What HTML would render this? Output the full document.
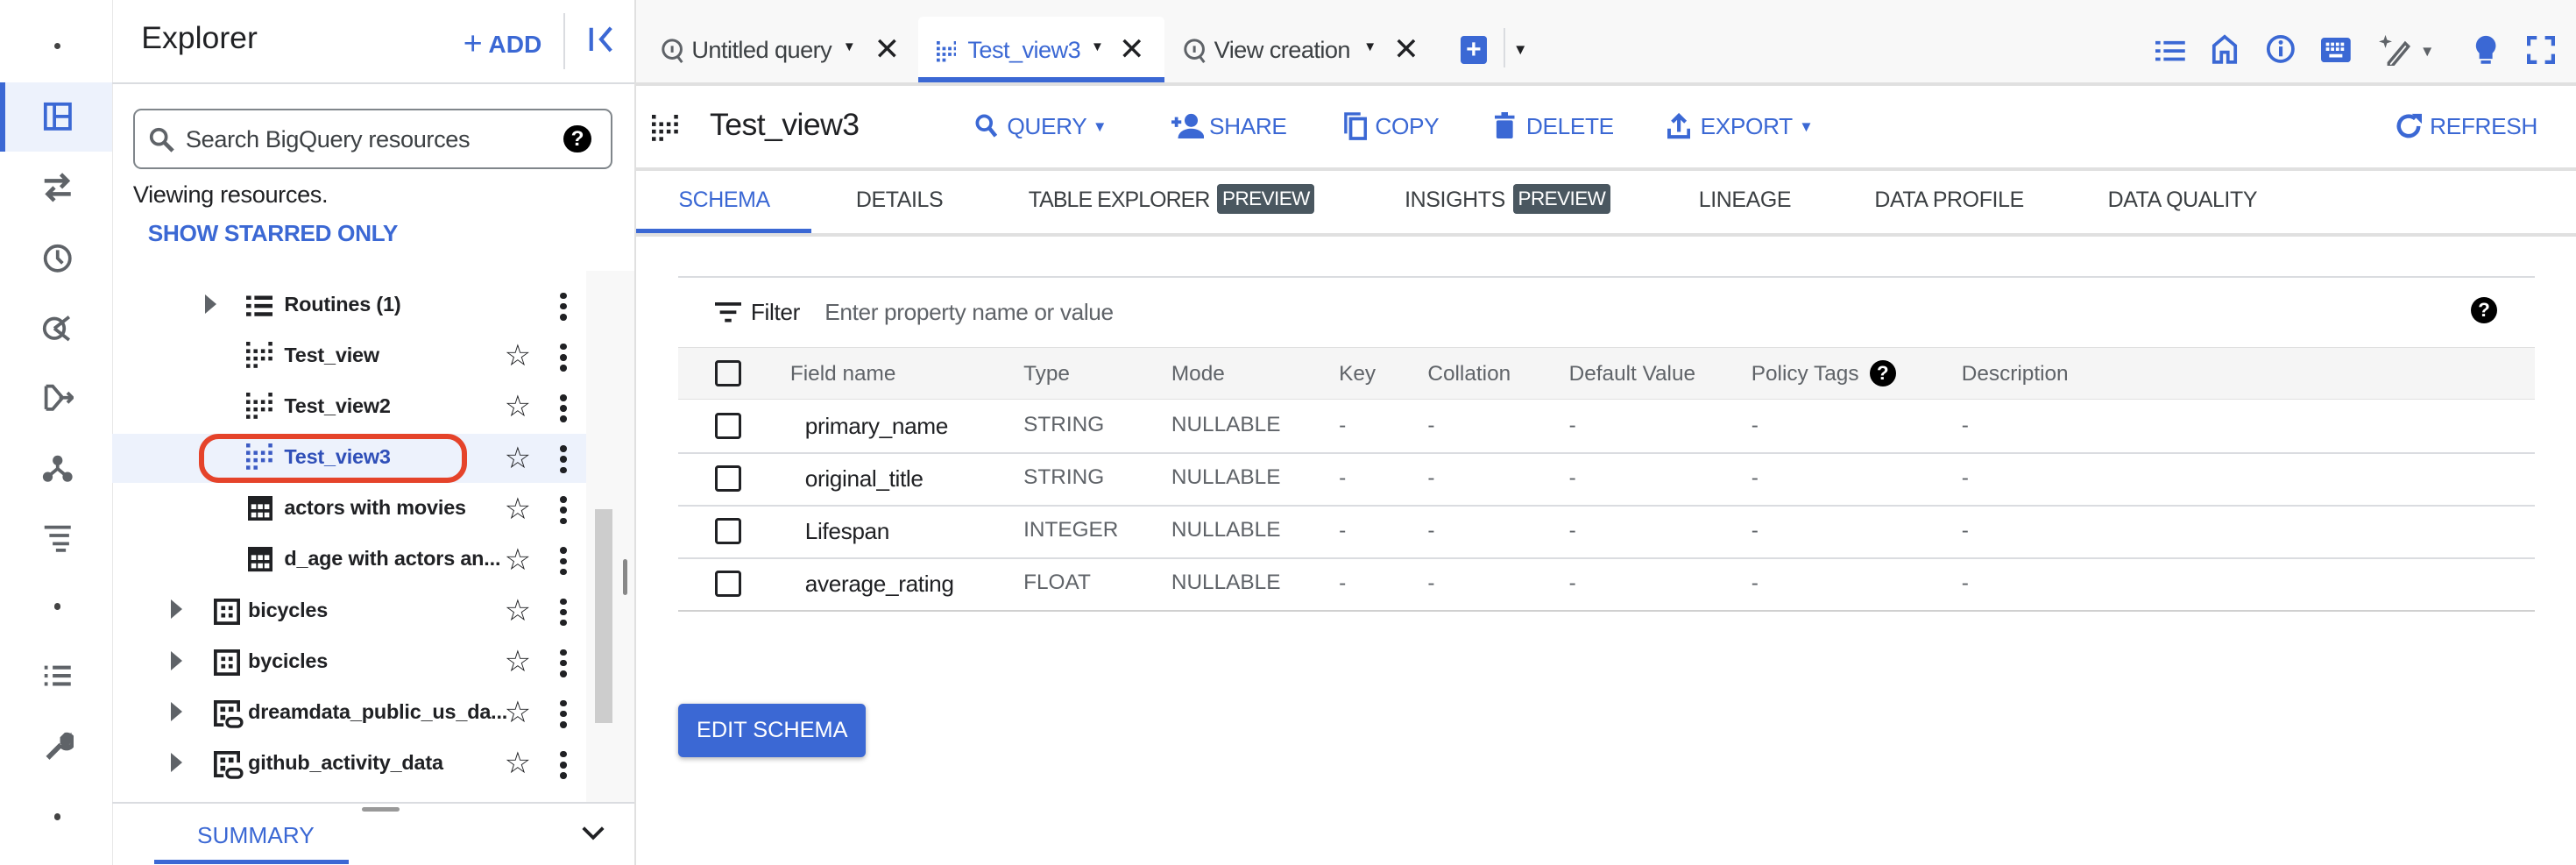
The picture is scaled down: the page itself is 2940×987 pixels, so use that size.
<!DOCTYPE html>
<html><head><meta charset="utf-8"><style>
*{box-sizing:border-box;margin:0;padding:0}
html,body{width:2940px;height:987px;overflow:hidden;background:#fff}
#r{zoom:1.875;width:1568px;height:527px;position:relative;font-family:"Liberation Sans",sans-serif;color:#202124;font-size:13px}
.a{position:absolute;white-space:nowrap}
.b{color:#3b68d4}
.m{font-weight:bold}
.t{font-weight:bold;font-size:12.5px;letter-spacing:-0.1px}
.hl{position:absolute;height:1px;background:#dadce0}
.vl{position:absolute;width:1px;background:#dadce0}
.dot{position:absolute;width:4px;height:4px;border-radius:2px;background:#444}
.star{font-size:18px;color:#202124}
.kb{position:absolute;width:4px}
.kb i{display:block;width:4px;height:4px;border-radius:2px;background:#202124;margin-bottom:2.5px}
.cb{position:absolute;width:16px;height:16px;border:2px solid #202124;border-radius:2px}
.tri{position:absolute;width:0;height:0;border-top:6px solid transparent;border-bottom:6px solid transparent;border-left:7px solid #5f6368}
.badge{position:absolute;background:#4a5760;color:#fff;font-size:12px;padding:2px 3px;border-radius:2px;letter-spacing:-0.3px}
.st{position:absolute;white-space:nowrap;font-size:13.3px;color:#3c4043;letter-spacing:-0.2px}
.hb{position:absolute;white-space:nowrap;font-size:14px;color:#3b68d4;letter-spacing:-0.2px}
</style></head><body><div id="r">
<div class="vl" style="left:68px;top:0;height:527px;background:#e8e8e8"></div>
<div class="a" style="left:0;top:50px;width:68px;height:42px;background:#edf2fc"></div>
<div class="a" style="left:0;top:50px;width:3px;height:42px;background:#3b68d4"></div>
<div class="dot" style="left:33px;top:26px"></div>
<div class="dot" style="left:33px;top:367px"></div>
<div class="dot" style="left:33px;top:495px"></div>
<svg class="a" style="left:26px;top:62px" width="18" height="18" viewBox="0 0 18 18"><rect x="1.5" y="1.5" width="15" height="15" fill="none" stroke="#3b68d4" stroke-width="2"/><path d="M7 1.5v15M7 9h9.5" stroke="#3b68d4" stroke-width="2"/></svg>
<svg class="a" style="left:25px;top:105px" width="20" height="18" viewBox="0 0 20 18"><path d="M2 5h13M12 1l4 4-4 4M18 13H5M8 9l-4 4 4 4" fill="none" stroke="#5f6368" stroke-width="2.4"/></svg>
<svg class="a" style="left:25px;top:147px" width="20" height="20"><circle cx="10" cy="10" r="7.5" fill="none" stroke="#5f6368" stroke-width="2"/><path d="M10 5v5l3 3" fill="none" stroke="#5f6368" stroke-width="2"/></svg>
<svg class="a" style="left:25px;top:190px" width="20" height="20"><circle cx="8" cy="10" r="6" fill="none" stroke="#5f6368" stroke-width="2"/><path d="M8 10l9-7M8 10l9 7" stroke="#5f6368" stroke-width="2"/></svg>
<svg class="a" style="left:25px;top:232px" width="20" height="20"><path d="M3 3v14M3 3h4l6 7-6 7H3M11 10h8M16 7l3 3-3 3" fill="none" stroke="#5f6368" stroke-width="2"/></svg>
<svg class="a" style="left:25px;top:275px" width="20" height="20"><circle cx="10" cy="5" r="3" fill="#5f6368"/><circle cx="4" cy="15" r="3" fill="#5f6368"/><circle cx="16" cy="15" r="3" fill="#5f6368"/><path d="M10 5v5L4 15M10 10l6 5" stroke="#5f6368" stroke-width="2" fill="none"/></svg>
<svg class="a" style="left:25px;top:318px" width="20" height="18"><path d="M2 3h16M5 8h12M7 13h10M9 17h6" stroke="#5f6368" stroke-width="2"/></svg>
<svg class="a" style="left:25px;top:403px" width="20" height="16"><path d="M2 3h2M7 3h11M2 8h2M7 8h11M2 13h2M7 13h11" stroke="#5f6368" stroke-width="2.2"/></svg>
<svg class="a" style="left:25px;top:444px" width="20" height="20"><path d="M4 17l8-8M12 9a4 4 0 1 0 3-6l-2 2 0 2 2 0 2-2a4 4 0 0 1-5 4" stroke="#5f6368" stroke-width="3" fill="none"/></svg>

<div class="vl" style="left:386px;top:0;height:527px;background:#e0e0e0"></div>
<div class="a" style="left:86px;top:12px;font-size:19px">Explorer</div>
<div class="a b" style="left:282px;top:14px;font-size:15px;font-weight:bold"><span style="font-size:20px;font-weight:normal;position:relative;top:1px">+</span> ADD</div>
<div class="vl" style="left:343px;top:8px;height:34px"></div>
<svg class="a" style="left:358px;top:15px" width="18" height="18"><path d="M2 2v14M14 2l-6 7 6 7" stroke="#3b68d4" stroke-width="2.2" fill="none"/></svg>
<div class="hl" style="left:68px;top:50px;width:318px"></div>
<div class="a" style="left:81px;top:66px;width:292px;height:37px;border:1.5px solid #80868b;border-radius:5px"></div>
<svg class="a" style="left:90px;top:77px" width="16" height="16"><circle cx="6.5" cy="6.5" r="4.5" fill="none" stroke="#5f6368" stroke-width="2"/><path d="M10 10l5 5" stroke="#5f6368" stroke-width="2.5"/></svg>
<div class="a" style="left:113px;top:76px;font-size:14.5px;color:#3c4043;letter-spacing:-0.2px">Search BigQuery resources</div>
<div class="a" style="left:343px;top:76px;width:17px;height:17px;border-radius:9px;background:#000;color:#fff;font-size:13px;font-weight:bold;text-align:center;line-height:17px">?</div>
<div class="a" style="left:81px;top:110px;font-size:14.5px;letter-spacing:-0.2px">Viewing resources.</div>
<div class="a b m" style="left:90px;top:134px;font-size:14px;letter-spacing:-0.2px">SHOW STARRED ONLY</div>
<div class="a" style="left:357px;top:165px;width:29px;height:323px;background:#f8f8f8"></div>
<div class="a" style="left:362px;top:310px;width:11px;height:130px;background:#cdcdcd"></div>
<div class="a" style="left:379px;top:340px;width:3px;height:22px;border-radius:2px;background:#888"></div>
<div class="a" style="left:68px;top:264px;width:289px;height:30px;background:#edf2fc"></div>
<div class="a" style="left:121px;top:264px;width:163px;height:30px;border:3.5px solid #e5432a;border-radius:12px"></div>

<div class="tri" style="left:125px;top:179px"></div>
<svg class="a" style="left:150px;top:179px" width="16" height="14"><path d="M0 2h3M5 2h11M0 7h3M5 7h11M0 12h3M5 12h11" stroke="#202124" stroke-width="2.4"/></svg>
<div class="a t" style="left:173px;top:178px">Routines (1)</div>
<svg class="a" style="left:150px;top:208px" width="16" height="16"><g fill="#202124"><rect x="0" y="0" width="2.4" height="2.4"/><rect x="0" y="4.5" width="2.4" height="2.4"/><rect x="0" y="9" width="2.4" height="2.4"/><rect x="0" y="13.5" width="2.4" height="2.4"/><rect x="4.5" y="4.5" width="2.4" height="2.4"/><rect x="4.5" y="9" width="2.4" height="2.4"/><rect x="4.5" y="13.5" width="2.4" height="2.4"/><rect x="9" y="4.5" width="2.4" height="2.4"/><rect x="9" y="9" width="2.4" height="2.4"/><rect x="13.5" y="0" width="2.4" height="2.4"/><rect x="13.5" y="4.5" width="2.4" height="2.4"/><rect x="13.5" y="9" width="2.4" height="2.4"/></g></svg>
<div class="a t" style="left:173px;top:209px">Test_view</div>
<svg class="a" style="left:150px;top:239px" width="16" height="16"><g fill="#202124"><rect x="0" y="0" width="2.4" height="2.4"/><rect x="0" y="4.5" width="2.4" height="2.4"/><rect x="0" y="9" width="2.4" height="2.4"/><rect x="0" y="13.5" width="2.4" height="2.4"/><rect x="4.5" y="4.5" width="2.4" height="2.4"/><rect x="4.5" y="9" width="2.4" height="2.4"/><rect x="4.5" y="13.5" width="2.4" height="2.4"/><rect x="9" y="4.5" width="2.4" height="2.4"/><rect x="9" y="9" width="2.4" height="2.4"/><rect x="13.5" y="0" width="2.4" height="2.4"/><rect x="13.5" y="4.5" width="2.4" height="2.4"/><rect x="13.5" y="9" width="2.4" height="2.4"/></g></svg>
<div class="a t" style="left:173px;top:240px">Test_view2</div>
<svg class="a" style="left:150px;top:270px" width="16" height="16"><g fill="#3b5bc4"><rect x="0" y="0" width="2.4" height="2.4"/><rect x="0" y="4.5" width="2.4" height="2.4"/><rect x="0" y="9" width="2.4" height="2.4"/><rect x="0" y="13.5" width="2.4" height="2.4"/><rect x="4.5" y="4.5" width="2.4" height="2.4"/><rect x="4.5" y="9" width="2.4" height="2.4"/><rect x="4.5" y="13.5" width="2.4" height="2.4"/><rect x="9" y="4.5" width="2.4" height="2.4"/><rect x="9" y="9" width="2.4" height="2.4"/><rect x="13.5" y="0" width="2.4" height="2.4"/><rect x="13.5" y="4.5" width="2.4" height="2.4"/><rect x="13.5" y="9" width="2.4" height="2.4"/></g></svg>
<div class="a t" style="left:173px;top:271px;color:#2f4fb8">Test_view3</div>
<svg class="a" style="left:151px;top:302px" width="15" height="15"><rect width="15" height="15" fill="#202124"/><g fill="#fff"><rect x="2" y="5" width="3" height="3"/><rect x="6" y="5" width="3" height="3"/><rect x="10" y="5" width="3" height="3"/><rect x="2" y="10" width="3" height="3"/><rect x="6" y="10" width="3" height="3"/><rect x="10" y="10" width="3" height="3"/></g></svg>
<div class="a t" style="left:173px;top:302px">actors with movies</div>
<svg class="a" style="left:151px;top:333px" width="15" height="15"><rect width="15" height="15" fill="#202124"/><g fill="#fff"><rect x="2" y="5" width="3" height="3"/><rect x="6" y="5" width="3" height="3"/><rect x="10" y="5" width="3" height="3"/><rect x="2" y="10" width="3" height="3"/><rect x="6" y="10" width="3" height="3"/><rect x="10" y="10" width="3" height="3"/></g></svg>
<div class="a t" style="left:173px;top:333px">d_age with actors an...</div>

<div class="tri" style="left:104px;top:365px"></div>
<svg class="a" style="left:130px;top:364px" width="16" height="16"><rect x="1" y="1" width="14" height="14" fill="none" stroke="#202124" stroke-width="2"/><g fill="#202124"><rect x="4.5" y="4.5" width="2.5" height="2.5"/><rect x="9" y="4.5" width="2.5" height="2.5"/><rect x="4.5" y="9" width="2.5" height="2.5"/><rect x="9" y="9" width="2.5" height="2.5"/></g></svg>
<div class="a t" style="left:151px;top:364px">bicycles</div>
<div class="tri" style="left:104px;top:396px"></div>
<svg class="a" style="left:130px;top:395px" width="16" height="16"><rect x="1" y="1" width="14" height="14" fill="none" stroke="#202124" stroke-width="2"/><g fill="#202124"><rect x="4.5" y="4.5" width="2.5" height="2.5"/><rect x="9" y="4.5" width="2.5" height="2.5"/><rect x="4.5" y="9" width="2.5" height="2.5"/><rect x="9" y="9" width="2.5" height="2.5"/></g></svg>
<div class="a t" style="left:151px;top:395px">bycicles</div>
<div class="tri" style="left:104px;top:427px"></div>
<svg class="a" style="left:130px;top:426px" width="18" height="18"><path d="M6 15H1V1h14v6" fill="none" stroke="#202124" stroke-width="2"/><g fill="#202124"><rect x="4" y="4" width="3" height="3"/><rect x="9" y="4" width="3" height="3"/><rect x="4" y="9" width="3" height="3"/></g><rect x="8" y="11" width="9" height="5" rx="2.5" fill="none" stroke="#202124" stroke-width="1.8"/></svg>
<div class="a t" style="left:151px;top:426px">dreamdata_public_us_da...</div>
<div class="tri" style="left:104px;top:458px"></div>
<svg class="a" style="left:130px;top:457px" width="18" height="18"><path d="M6 15H1V1h14v6" fill="none" stroke="#202124" stroke-width="2"/><g fill="#202124"><rect x="4" y="4" width="3" height="3"/><rect x="9" y="4" width="3" height="3"/><rect x="4" y="9" width="3" height="3"/></g><rect x="8" y="11" width="9" height="5" rx="2.5" fill="none" stroke="#202124" stroke-width="1.8"/></svg>
<div class="a t" style="left:151px;top:457px">github_activity_data</div>

<div class="a star" style="left:307px;top:206px">☆</div>
<div class="a star" style="left:307px;top:237px">☆</div>
<div class="a star" style="left:307px;top:268px">☆</div>
<div class="a star" style="left:307px;top:299px">☆</div>
<div class="a star" style="left:307px;top:330px">☆</div>
<div class="a star" style="left:307px;top:361px">☆</div>
<div class="a star" style="left:307px;top:392px">☆</div>
<div class="a star" style="left:307px;top:423px">☆</div>
<div class="a star" style="left:307px;top:454px">☆</div>
<div class="kb" style="left:341px;top:178px"><i></i><i></i><i></i></div>
<div class="kb" style="left:341px;top:209px"><i></i><i></i><i></i></div>
<div class="kb" style="left:341px;top:240px"><i></i><i></i><i></i></div>
<div class="kb" style="left:341px;top:271px"><i></i><i></i><i></i></div>
<div class="kb" style="left:341px;top:302px"><i></i><i></i><i></i></div>
<div class="kb" style="left:341px;top:333px"><i></i><i></i><i></i></div>
<div class="kb" style="left:341px;top:364px"><i></i><i></i><i></i></div>
<div class="kb" style="left:341px;top:395px"><i></i><i></i><i></i></div>
<div class="kb" style="left:341px;top:426px"><i></i><i></i><i></i></div>
<div class="kb" style="left:341px;top:457px"><i></i><i></i><i></i></div>

<div class="hl" style="left:68px;top:488px;width:318px"></div>
<div class="a" style="left:220px;top:491px;width:23px;height:3px;border-radius:2px;background:#999"></div>
<div class="a b" style="left:120px;top:500px;font-size:14px">SUMMARY</div>
<div class="a" style="left:94px;top:523px;width:118px;height:3px;background:#3b68d4"></div>
<svg class="a" style="left:353px;top:501px" width="16" height="12"><path d="M2 3l6 6 6-6" stroke="#202124" stroke-width="2" fill="none"/></svg>

<div class="a" style="left:387px;top:0;width:1181px;height:50px;background:#f8f8f8"></div>
<div class="a" style="left:559px;top:10px;width:150px;height:40px;background:#fff;border-radius:3px 3px 0 0"></div>
<div class="a" style="left:559px;top:47px;width:150px;height:3px;background:#3b68d4"></div>
<div class="hl" style="left:387px;top:50px;width:1181px;height:2px;background:#e0e0e0"></div>
<svg class="a" style="left:402px;top:23px" width="14" height="16"><circle cx="7" cy="7" r="5.5" fill="none" stroke="#5f6368" stroke-width="1.6"/><path d="M10 11l3 4M7 5v4" stroke="#5f6368" stroke-width="1.6"/></svg>
<div class="a" style="left:421px;top:22px;font-size:14.5px;color:#3c4043;letter-spacing:-0.3px">Untitled query</div>
<div class="a" style="left:513px;top:24px;font-size:8px">▼</div>
<div class="a" style="left:532px;top:19px;font-size:19px">✕</div>
<svg class="a" style="left:570px;top:25px" width="12" height="13"><g fill="#3b68d4"><rect x="0" y="0" width="2" height="2"/><rect x="0" y="3.5" width="2" height="2"/><rect x="0" y="7" width="2" height="2"/><rect x="0" y="10.5" width="2" height="2"/><rect x="3.5" y="3.5" width="2" height="2"/><rect x="3.5" y="7" width="2" height="2"/><rect x="3.5" y="10.5" width="2" height="2"/><rect x="7" y="3.5" width="2" height="2"/><rect x="7" y="7" width="2" height="2"/><rect x="10.5" y="0" width="2" height="2"/><rect x="10.5" y="3.5" width="2" height="2"/><rect x="10.5" y="7" width="2" height="2"/></g></svg>
<div class="a b" style="left:589px;top:22px;font-size:14.5px;letter-spacing:-0.3px">Test_view3</div>
<div class="a" style="left:664px;top:24px;font-size:8px">▼</div>
<div class="a" style="left:681px;top:19px;font-size:19px">✕</div>
<svg class="a" style="left:720px;top:23px" width="14" height="16"><circle cx="7" cy="7" r="5.5" fill="none" stroke="#5f6368" stroke-width="1.6"/><path d="M10 11l3 4M7 5v4" stroke="#5f6368" stroke-width="1.6"/></svg>
<div class="a" style="left:739px;top:22px;font-size:14.5px;color:#3c4043;letter-spacing:-0.3px">View creation</div>
<div class="a" style="left:830px;top:24px;font-size:8px">▼</div>
<div class="a" style="left:848px;top:19px;font-size:19px">✕</div>
<div class="a" style="left:889px;top:22px;width:16px;height:17px;background:#3b68d4;border-radius:2px;color:#fff;font-size:16px;font-weight:bold;text-align:center;line-height:17px">+</div>
<div class="vl" style="left:915px;top:17px;height:24px"></div>
<div class="a" style="left:921px;top:25px;font-size:9px">▼</div>
<svg class="a" style="left:1312px;top:24px" width="18" height="14"><path d="M0 2h3M5 2h13M0 7h3M5 7h13M0 12h3M5 12h13" stroke="#3b68d4" stroke-width="2"/></svg>
<svg class="a" style="left:1346px;top:21px" width="16" height="18"><path d="M1.5 17V7L8 1.5 14.5 7v10H10v-6H6v6z" fill="none" stroke="#3b68d4" stroke-width="2"/></svg>
<svg class="a" style="left:1379px;top:21px" width="18" height="18"><circle cx="9" cy="9" r="7.5" fill="none" stroke="#3b68d4" stroke-width="2"/><rect x="8" y="7.5" width="2.2" height="6" fill="#3b68d4"/><circle cx="9.1" cy="5" r="1.3" fill="#3b68d4"/></svg>
<svg class="a" style="left:1413px;top:23px" width="18" height="15"><rect width="18" height="15" rx="2" fill="#3b68d4"/><g fill="#fff"><rect x="3" y="3" width="2" height="2"/><rect x="6" y="3" width="2" height="2"/><rect x="9" y="3" width="2" height="2"/><rect x="12" y="3" width="2" height="2"/><rect x="3" y="6" width="2" height="2"/><rect x="6" y="6" width="2" height="2"/><rect x="9" y="6" width="2" height="2"/><rect x="12" y="6" width="2" height="2"/><rect x="5" y="10" width="8" height="2"/></g></svg>
<svg class="a" style="left:1448px;top:20px" width="22" height="20"><path d="M4 1l1 3 3 1-3 1-1 3-1-3-3-1 3-1z" fill="#5f6368"/><path d="M6 18l10-12 2 2-10 12H6z" fill="none" stroke="#5f6368" stroke-width="1.8"/></svg>
<div class="a" style="left:1473px;top:26px;font-size:9px;color:#5f6368">▼</div>
<svg class="a" style="left:1506px;top:21px" width="14" height="20"><path d="M7 1a6 6 0 0 0-4 10.5V15h8v-3.5A6 6 0 0 0 7 1z" fill="#3b68d4"/><rect x="4" y="16" width="6" height="2" fill="#3b68d4"/></svg>
<svg class="a" style="left:1538px;top:22px" width="17" height="17"><path d="M1 6V1h5M11 1h5v5M16 11v5h-5M6 16H1v-5" stroke="#3b68d4" stroke-width="2.4" fill="none"/></svg>

<svg class="a" style="left:397px;top:70px" width="16" height="16"><g fill="#202124"><rect x="0" y="0" width="2.4" height="2.4"/><rect x="0" y="4.5" width="2.4" height="2.4"/><rect x="0" y="9" width="2.4" height="2.4"/><rect x="0" y="13.5" width="2.4" height="2.4"/><rect x="4.5" y="4.5" width="2.4" height="2.4"/><rect x="4.5" y="9" width="2.4" height="2.4"/><rect x="4.5" y="13.5" width="2.4" height="2.4"/><rect x="9" y="4.5" width="2.4" height="2.4"/><rect x="9" y="9" width="2.4" height="2.4"/><rect x="13.5" y="0" width="2.4" height="2.4"/><rect x="13.5" y="4.5" width="2.4" height="2.4"/><rect x="13.5" y="9" width="2.4" height="2.4"/></g></svg>
<div class="a" style="left:432px;top:65px;font-size:19px;letter-spacing:-0.3px">Test_view3</div>
<svg class="a" style="left:593px;top:69px" width="14" height="16"><circle cx="6" cy="6" r="4.2" fill="none" stroke="#3b68d4" stroke-width="2"/><path d="M9 9l4 5" stroke="#3b68d4" stroke-width="2.4"/></svg>
<div class="hb" style="left:613px;top:69px">QUERY</div>
<div class="a b" style="left:665px;top:72px;font-size:9px">▼</div>
<svg class="a" style="left:713px;top:68px" width="20" height="16"><path d="M0 6h6M3 3v6" stroke="#3b68d4" stroke-width="2"/><circle cx="12" cy="5" r="4" fill="#3b68d4"/><path d="M4 16c0-4 4-6 8-6s8 2 8 6z" fill="#3b68d4"/></svg>
<div class="hb" style="left:736px;top:69px">SHARE</div>
<svg class="a" style="left:818px;top:68px" width="14" height="18"><path d="M1 13V1h9" fill="none" stroke="#3b68d4" stroke-width="1.8"/><rect x="4" y="4" width="9" height="12" fill="none" stroke="#3b68d4" stroke-width="2"/></svg>
<div class="hb" style="left:837px;top:69px">COPY</div>
<svg class="a" style="left:910px;top:68px" width="12" height="17"><path d="M0 3h12M4 1h4" stroke="#3b68d4" stroke-width="2"/><rect x="1" y="5" width="10" height="11" rx="1" fill="#3b68d4"/></svg>
<div class="hb" style="left:929px;top:69px">DELETE</div>
<svg class="a" style="left:1015px;top:68px" width="14" height="17"><path d="M7 2v10M3 6l4-4 4 4M1 10v5h12v-5" fill="none" stroke="#3b68d4" stroke-width="2.2"/></svg>
<div class="hb" style="left:1035px;top:69px">EXPORT</div>
<div class="a b" style="left:1095px;top:72px;font-size:9px">▼</div>
<svg class="a" style="left:1458px;top:68px" width="17" height="17"><path d="M14 8.5a6 6 0 1 1-2-4.5" fill="none" stroke="#3b68d4" stroke-width="2.4"/><path d="M10 1h6v6z" fill="#3b68d4"/></svg>
<div class="hb" style="left:1479px;top:69px">REFRESH</div>
<div class="hl" style="left:387px;top:102px;width:1181px;height:2px;background:#e0e0e0"></div>

<div class="st" style="left:413px;top:114px;color:#3b68d4">SCHEMA</div>
<div class="a" style="left:387px;top:139px;width:107px;height:3px;background:#3b68d4"></div>
<div class="st" style="left:521px;top:114px">DETAILS</div>
<div class="st" style="left:626px;top:114px;letter-spacing:-0.5px">TABLE EXPLORER</div>
<div class="badge" style="left:741px;top:112px">PREVIEW</div>
<div class="st" style="left:855px;top:114px">INSIGHTS</div>
<div class="badge" style="left:921px;top:112px">PREVIEW</div>
<div class="st" style="left:1034px;top:114px">LINEAGE</div>
<div class="st" style="left:1141px;top:114px">DATA PROFILE</div>
<div class="st" style="left:1283px;top:114px">DATA QUALITY</div>
<div class="hl" style="left:387px;top:142px;width:1181px;height:2px;background:#e0e0e0"></div>

<div class="hl" style="left:413px;top:168px;width:1130px"></div>
<svg class="a" style="left:435px;top:184px" width="16" height="12"><path d="M0 1h16M3 6h10M6 11h4" stroke="#202124" stroke-width="2"/></svg>
<div class="a" style="left:457px;top:182px;font-size:14px;letter-spacing:-0.2px">Filter</div>
<div class="a" style="left:502px;top:182px;font-size:14px;color:#5f6368;letter-spacing:-0.2px">Enter property name or value</div>
<div class="a" style="left:1504px;top:181px;width:16px;height:16px;border-radius:8px;background:#000;color:#fff;font-size:12px;font-weight:bold;text-align:center;line-height:16px">?</div>

<div class="a" style="left:413px;top:211px;width:1130px;height:32px;background:#f5f5f5;border-top:1px solid #e0e0e0;border-bottom:1px solid #e0e0e0"></div>
<div class="cb" style="left:435px;top:219px"></div>
<div class="a" style="left:481px;top:220px;color:#5f6368">Field name</div>
<div class="a" style="left:623px;top:220px;color:#5f6368">Type</div>
<div class="a" style="left:713px;top:220px;color:#5f6368">Mode</div>
<div class="a" style="left:815px;top:220px;color:#5f6368">Key</div>
<div class="a" style="left:869px;top:220px;color:#5f6368">Collation</div>
<div class="a" style="left:955px;top:220px;color:#5f6368">Default Value</div>
<div class="a" style="left:1066px;top:220px;color:#5f6368">Policy Tags</div>
<div class="a" style="left:1138px;top:219px;width:16px;height:16px;border-radius:8px;background:#000;color:#fff;font-size:12px;font-weight:bold;text-align:center;line-height:16px">?</div>
<div class="a" style="left:1194px;top:220px;color:#5f6368">Description</div>

<div class="hl" style="left:413px;top:275px;width:1130px"></div>
<div class="hl" style="left:413px;top:307px;width:1130px"></div>
<div class="hl" style="left:413px;top:339px;width:1130px"></div>
<div class="hl" style="left:413px;top:371px;width:1130px;background:#d0d0d0"></div>

<div class="cb" style="left:435px;top:251px"></div>
<div class="a" style="left:490px;top:251px;font-size:14px;letter-spacing:-0.2px">primary_name</div>
<div class="a" style="left:623px;top:251px;color:#5f6368">STRING</div>
<div class="a" style="left:713px;top:251px;color:#5f6368">NULLABLE</div>
<div class="cb" style="left:435px;top:283px"></div>
<div class="a" style="left:490px;top:283px;font-size:14px;letter-spacing:-0.2px">original_title</div>
<div class="a" style="left:623px;top:283px;color:#5f6368">STRING</div>
<div class="a" style="left:713px;top:283px;color:#5f6368">NULLABLE</div>
<div class="cb" style="left:435px;top:315px"></div>
<div class="a" style="left:490px;top:315px;font-size:14px;letter-spacing:-0.2px">Lifespan</div>
<div class="a" style="left:623px;top:315px;color:#5f6368">INTEGER</div>
<div class="a" style="left:713px;top:315px;color:#5f6368">NULLABLE</div>
<div class="cb" style="left:435px;top:347px"></div>
<div class="a" style="left:490px;top:347px;font-size:14px;letter-spacing:-0.2px">average_rating</div>
<div class="a" style="left:623px;top:347px;color:#5f6368">FLOAT</div>
<div class="a" style="left:713px;top:347px;color:#5f6368">NULLABLE</div>

<div class="a" style="left:815px;top:243px;color:#5f6368;line-height:32px">-<br>-<br>-<br>-</div>
<div class="a" style="left:869px;top:243px;color:#5f6368;line-height:32px">-<br>-<br>-<br>-</div>
<div class="a" style="left:955px;top:243px;color:#5f6368;line-height:32px">-<br>-<br>-<br>-</div>
<div class="a" style="left:1066px;top:243px;color:#5f6368;line-height:32px">-<br>-<br>-<br>-</div>
<div class="a" style="left:1194px;top:243px;color:#5f6368;line-height:32px">-<br>-<br>-<br>-</div>

<div class="a" style="left:413px;top:428px;width:114px;height:33px;background:#3b68d4;border-radius:3px;color:#fff;font-size:13.5px;text-align:center;line-height:33px;box-shadow:0 1px 3px rgba(0,0,0,.3)">EDIT SCHEMA</div>
</div></body></html>
